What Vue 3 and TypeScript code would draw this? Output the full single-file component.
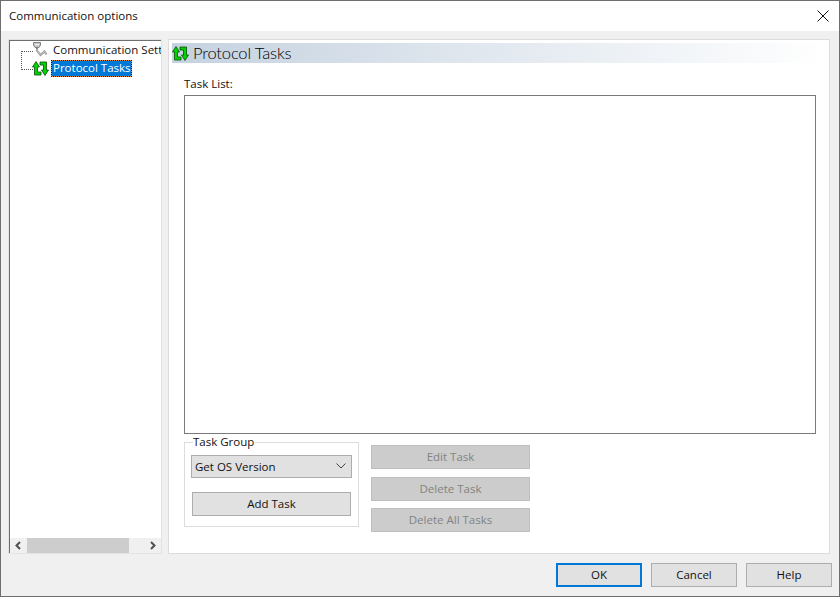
<script setup lang="ts">
const actions: string[] = ['Edit Task', 'Delete Task', 'Delete All Tasks']
</script>

<template>
  <div class="window">
    <header class="titlebar">
      <span class="title">Communication options</span>
      <svg class="close" width="12" height="12" viewBox="0 0 12 12"><path d="M.5.5l11 11M11.5.5l-11 11" stroke="#111" stroke-width="1" fill="none" /></svg>
    </header>
    <main class="body">
      <aside class="tree">
        <div class="tree-items">
          <div class="connector"></div>
          <div class="node">
            <svg class="node-icon" width="20" height="18" viewBox="0 0 20 18">
              <path d="M2.500 1.500h7v2.500l-1.500 2.500h-4l-1.500-2.500z" fill="#c9c9c9" stroke="#808080" />
              <path d="M4 3.500h4" stroke="#eee" />
              <path d="M6 7v2.500l3.500 4.500 4-3.500 2 3" fill="none" stroke="#8a8a8a" stroke-width="2" />
              <path d="M6 8v1.500l3.500 4.500 4-3.500 2 3" fill="none" stroke="#e4e4e4" stroke-width=".7" />
            </svg>
            <span class="node-label">Communication Settings</span>
          </div>
          <div class="node">
            <svg class="node-icon arrows" width="17" height="15" viewBox="0 0 17 15">
              <path d="M4 .5L.5 6h2v8H9v-3H5.500V6h2z" fill="#00d400" stroke="#064d06" stroke-width=".8" />
              <path d="M13 14.500L16.500 9h-2V1H8v3h3.500v5h-2z" fill="#00d400" stroke="#064d06" stroke-width=".8" />
            </svg>
            <span class="node-label selected">Protocol Tasks</span>
          </div>
        </div>
        <div class="hscroll">
          <svg width="17" height="15" viewBox="0 0 17 15"><path d="M10 4L6.500 7.500 10 11" fill="none" stroke="#505050" stroke-width="2" /></svg>
          <div class="track"><div class="thumb"></div></div>
          <svg width="17" height="15" viewBox="0 0 17 15"><path d="M7 4l3.500 3.500L7 11" fill="none" stroke="#505050" stroke-width="2" /></svg>
        </div>
      </aside>
      <section class="panel">
        <div class="banner">
          <svg width="17" height="15" viewBox="0 0 17 15">
            <path d="M4 .5L.5 6h2v8H9v-3H5.500V6h2z" fill="#00d400" stroke="#064d06" stroke-width=".8" />
            <path d="M13 14.500L16.500 9h-2V1H8v3h3.500v5h-2z" fill="#00d400" stroke="#064d06" stroke-width=".8" />
          </svg>
          <span class="banner-text">Protocol Tasks</span>
        </div>
        <div class="content">
          <label class="list-label">Task List:</label>
          <div class="listbox"></div>
          <div class="controls">
            <fieldset class="group">
              <legend>Task Group</legend>
              <div class="select">
                <span>Get OS Version</span>
                <svg width="10" height="6" viewBox="0 0 10 6"><path d="M.5.500L5 5 9.500.5" fill="none" stroke="#444" /></svg>
              </div>
              <button class="btn add">Add Task</button>
            </fieldset>
            <div class="actions">
              <button v-for="a in actions" :key="a" class="btn disabled">{{ a }}</button>
            </div>
          </div>
        </div>
      </section>
    </main>
    <footer class="footer">
      <button class="btn foot primary">OK</button>
      <button class="btn foot">Cancel</button>
      <button class="btn foot">Help</button>
    </footer>
  </div>
</template>

<style>
html, body { margin: 0; padding: 0; background: #f0f0f0; }
</style>

<style scoped>
.window {
  box-sizing: border-box;
  width: 840px;
  height: 597px;
  border: 1px solid #6e6e6e;
  background: #f0f0f0;
  display: flex;
  flex-direction: column;
  font-family: "Open Sans", "Noto Sans", sans-serif;
  font-size: 11.5px;
  color: #111;
}
.titlebar {
  box-sizing: border-box;
  height: 30px;
  flex: none;
  background: #fff;
  display: flex;
  align-items: center;
  justify-content: space-between;
  padding: 0 10px 2px 8px;
}
.close { margin-top: 2px; }
.body {
  flex: none;
  height: 515px;
  margin-top: 8px;
  padding-left: 7px;
  display: flex;
  gap: 6px;
}
.tree {
  box-sizing: border-box;
  width: 154px;
  height: 515px;
  background: #fff;
  border: 1px solid #e3e3e3;
  box-shadow: inset 1px 1px 0 #6e6e6e;
  padding-left: 1px;
  display: flex;
  flex-direction: column;
}
.tree-items {
  flex: 1;
  position: relative;
  overflow: hidden;
  margin-top: 1px;
}
.connector {
  position: absolute;
  left: 11px;
  top: 10px;
  width: 11px;
  height: 17px;
  border-left: 1px dotted #555;
  border-top: 1px dotted #555;
  border-bottom: 1px dotted #555;
}
.node {
  display: flex;
  align-items: center;
  height: 18px;
  padding-left: 21px;
  white-space: nowrap;
}
.node-icon { flex: none; position: relative; }
.arrows { margin-left: 1px; margin-right: 2px; }
.node-label { padding: 0 1px 1px 2px; line-height: 16px; }
.selected {
  background: #0078d7;
  color: #fff;
  box-shadow: inset 0 0 0 1px #e08a20;
  outline: 1px dotted #1a1a1a;
  outline-offset: -1px;
  padding: 0 1px 1px 2px;
}
.hscroll {
  flex: none;
  height: 15px;
  display: flex;
  background: #f0f0f0;
}
.track { flex: 1; }
.thumb { width: 102px; height: 15px; background: #cdcdcd; }
.panel {
  box-sizing: border-box;
  width: 662px;
  height: 515px;
  background: #fff;
  border: 1px solid #dcdcdc;
  padding: 3px 3px 0;
  display: flex;
  flex-direction: column;
}
.banner {
  height: 20px;
  flex: none;
  display: flex;
  align-items: center;
  gap: 4px;
  background: linear-gradient(90deg, #c5d2e0 0%, #ffffff 100%);
}
.banner-text {
  font-family: "Lato", "Open Sans", sans-serif;
  font-weight: 300;
  font-size: 16.5px;
  letter-spacing: -0.15px;
  color: #000;
}
.content {
  padding: 12px 9px 0 12px;
  display: flex;
  flex-direction: column;
}
.list-label { height: 20px; line-height: 18px; }
.listbox {
  box-sizing: border-box;
  width: 632px;
  height: 339px;
  background: #fff;
  border: 1px solid #7a7a7a;
}
.controls {
  display: flex;
  gap: 12px;
}
.group {
  box-sizing: border-box;
  width: 175px;
  height: 93px;
  margin: 0;
  padding: 0 6px;
  border: 1px solid #dcdcdc;
  display: flex;
  flex-direction: column;
}
.group legend {
  margin-left: 2px;
  padding: 0 1px 0 0;
  font-size: 11.5px;
  line-height: 16px;
}
.select {
  box-sizing: border-box;
  height: 23px;
  margin-top: 5px;
  width: 161px;
  background: #e1e1e1;
  border: 1px solid #adadad;
  display: flex;
  align-items: center;
  justify-content: space-between;
  padding: 0 5px 1px 3px;
}
.btn {
  box-sizing: border-box;
  background: #e1e1e1;
  border: 1px solid #adadad;
  font: inherit;
  color: #111;
  padding: 0 0 2px;
  height: 24px;
}
.add { width: 159px; margin: 14px 0 0 1px; }
.actions {
  display: flex;
  flex-direction: column;
  gap: 8px;
  padding-top: 11px;
  width: 159px;
}
.actions .btn:last-child { margin-top: -1px; }
.disabled {
  background: #cccccc;
  border-color: #bfbfbf;
  color: #838383;
}
.footer {
  flex: 1;
  display: flex;
  justify-content: flex-end;
  gap: 9px;
  padding: 9px 7px 0 0;
}
.foot { width: 86px; height: 24px; }
.primary { border: 2px solid #0078d7; }
</style>
